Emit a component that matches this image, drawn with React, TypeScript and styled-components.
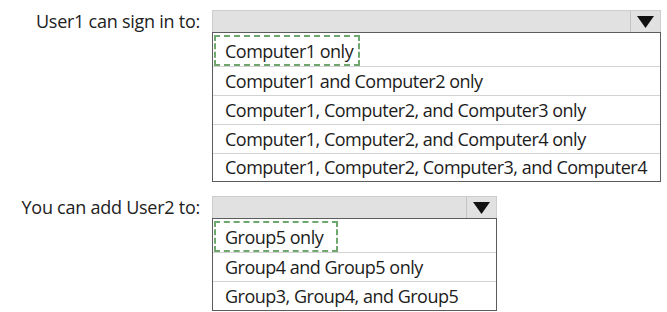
import styled, { createGlobalStyle } from "styled-components";

const GlobalStyle = createGlobalStyle`
  body {
    margin: 0;
    background: #ffffff;
    font-family: "Open Sans", "Noto Sans", Arial, sans-serif;
    color: #1c1c1c;
  }
`;

const Page = styled.div`
  width: 667px;
  height: 312px;
  padding-top: 10px;
  box-sizing: border-box;
  display: flex;
  flex-direction: column;
  gap: 14px;
`;

const Question = styled.div`
  display: flex;
  align-items: flex-start;
  gap: 12px;
`;

const Label = styled.div`
  width: 200px;
  text-align: right;
  font-size: 18px;
  letter-spacing: -0.25px;
  line-height: 22px;
  color: #222;
  white-space: nowrap;
`;

const Dropdown = styled.div<{ $width: number }>`
  width: ${({ $width }) => $width}px;
  display: flex;
  flex-direction: column;
`;

const Header = styled.div`
  height: 22px;
  box-sizing: border-box;
  display: flex;
  justify-content: flex-end;
  background: #e1e1e1;
  border: 1px solid #cdcdcd;
  border-bottom: none;
`;

const ArrowCell = styled.div`
  width: 29px;
  display: flex;
  align-items: center;
  justify-content: center;
  border-left: 1px solid #c4c4c4;

  svg {
    display: block;
  }
`;

const OptionList = styled.div`
  border: 1px solid #5c5c5c;
  display: flex;
  flex-direction: column;
`;

const Option = styled.div<{ $selected?: boolean }>`
  height: ${({ $selected }) => ($selected ? "33px" : "29px")};
  box-sizing: border-box;
  display: flex;
  align-items: ${({ $selected }) => ($selected ? "flex-end" : "center")};
  padding: ${({ $selected }) => ($selected ? "2px 0 0 1px" : "0 0 0 12px")};
  font-size: 18px;
  letter-spacing: -0.5px;
  white-space: nowrap;

  & + & {
    border-top: 1px solid #d2d2d2;
  }

  & + & + & + & {
    height: 28.5px;
  }
`;

const Marker = styled.div<{ $width: number }>`
  width: ${({ $width }) => $width}px;
  height: 31px;
  box-sizing: border-box;
  display: flex;
  align-items: center;
  padding-left: 9px;
  border: 2px dashed #6ea86e;
`;

const Arrow = () => (
  <svg width="17" height="12" viewBox="0 0 17 12">
    <polygon points="0,0 17,0 8.5,12" fill="#111" />
  </svg>
);

type Item = { label: string; options: string[]; width: number; mark: number };

const items: Item[] = [
  {
    label: "User1 can sign in to:",
    width: 449,
    mark: 146,
    options: [
      "Computer1 only",
      "Computer1 and Computer2 only",
      "Computer1, Computer2, and Computer3 only",
      "Computer1, Computer2, and Computer4 only",
      "Computer1, Computer2, Computer3, and Computer4",
    ],
  },
  {
    label: "You can add User2 to:",
    width: 285,
    mark: 124,
    options: ["Group5 only", "Group4 and Group5 only", "Group3, Group4, and Group5"],
  },
];

const App = () => {
  return (
    <>
      <GlobalStyle />
      <Page>
        {items.map((item) => (
          <Question key={item.label}>
            <Label>{item.label}</Label>
            <Dropdown $width={item.width}>
              <Header>
                <ArrowCell>
                  <Arrow />
                </ArrowCell>
              </Header>
              <OptionList>
                {item.options.map((opt, i) =>
                  i === 0 ? (
                    <Option key={opt} $selected>
                      <Marker $width={item.mark}>{opt}</Marker>
                    </Option>
                  ) : (
                    <Option key={opt}>{opt}</Option>
                  )
                )}
              </OptionList>
            </Dropdown>
          </Question>
        ))}
      </Page>
    </>
  );
};

export default App;
